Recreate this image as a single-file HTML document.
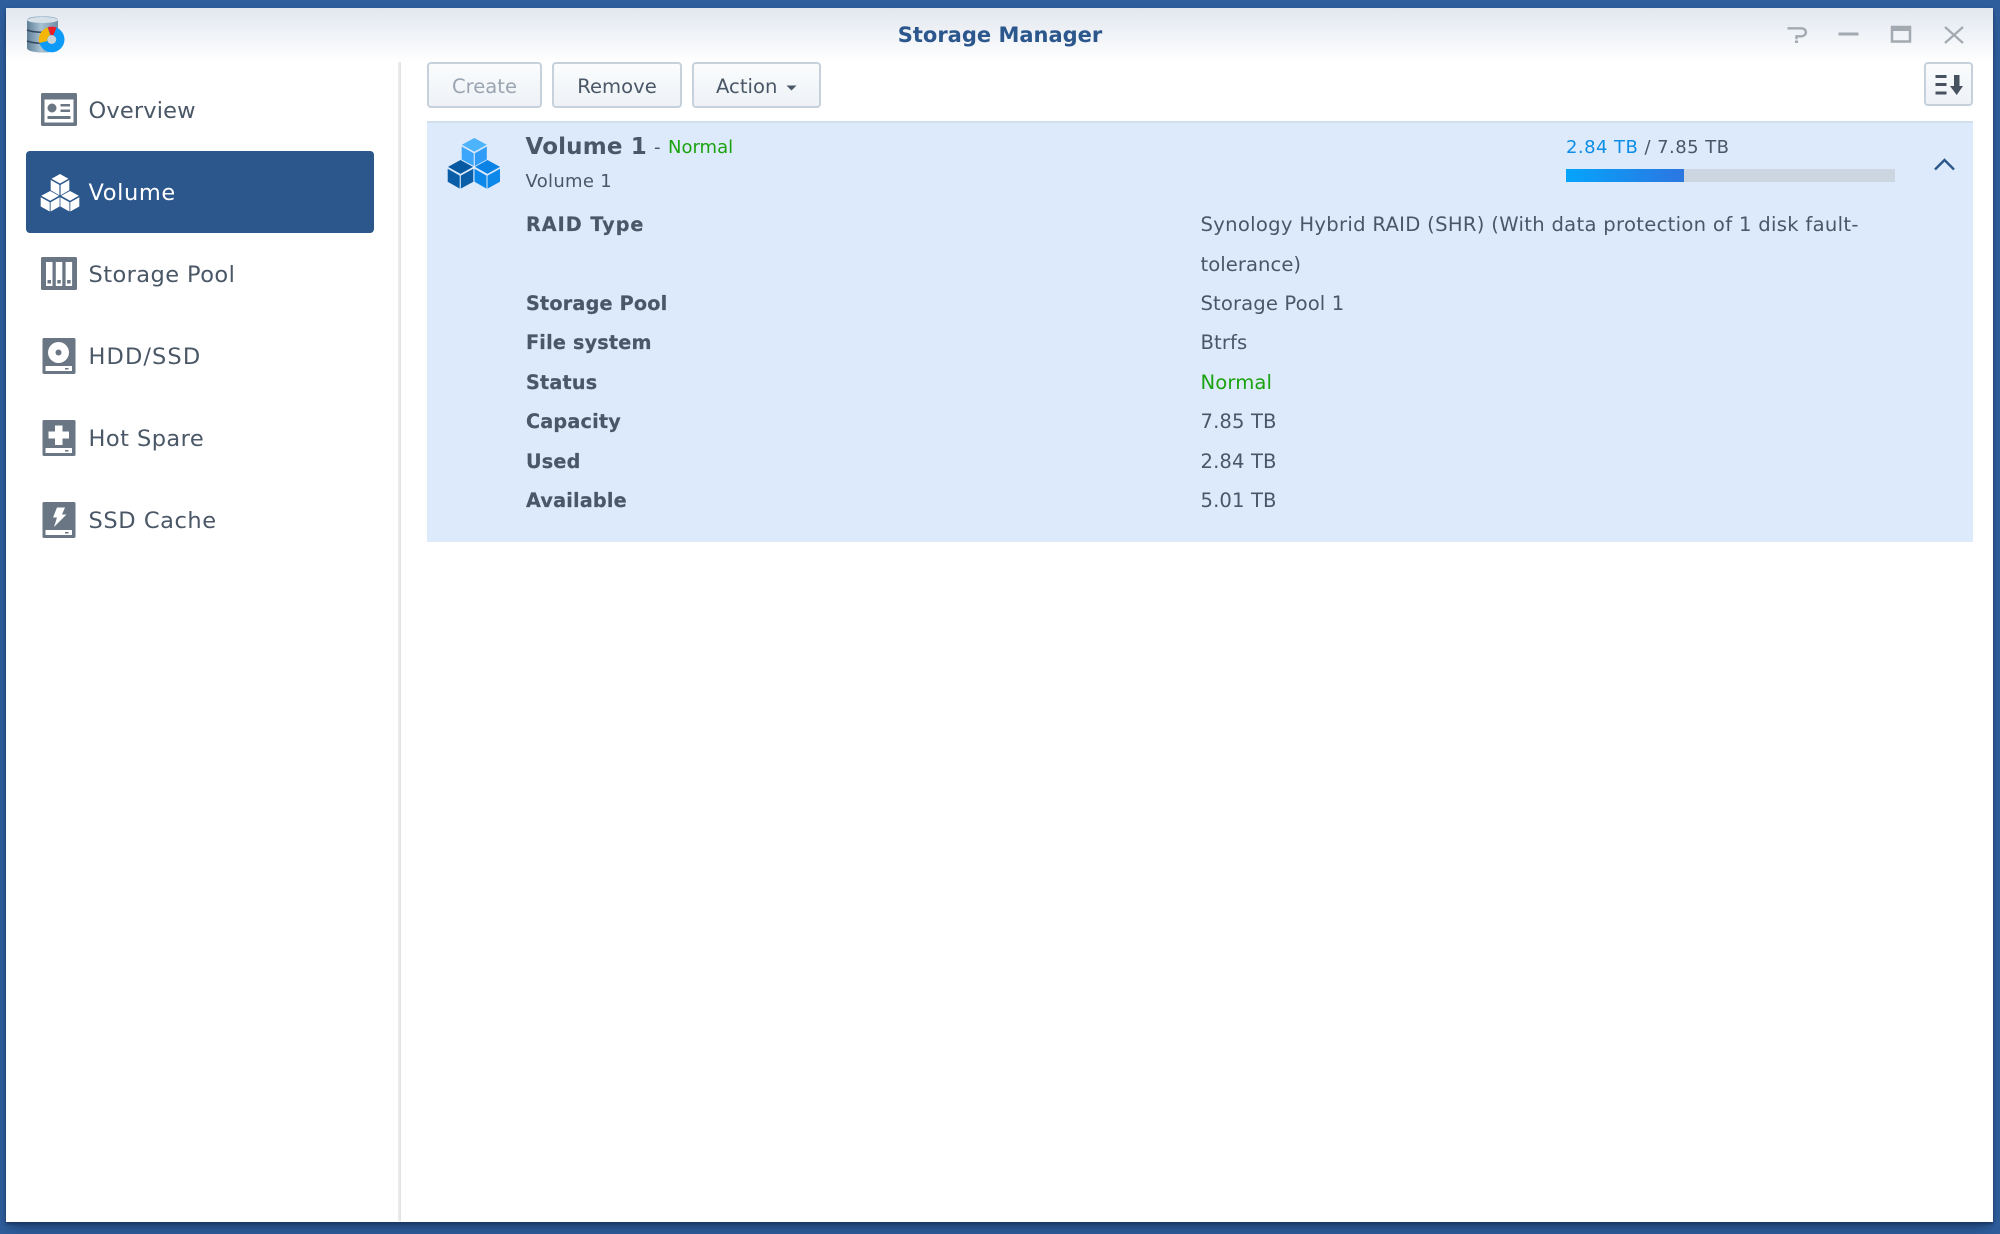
<!DOCTYPE html>
<html lang="en"><head><meta charset="utf-8"><title>Storage Manager</title>
<style>
html,body{margin:0;padding:0;width:2000px;height:1234px;overflow:hidden;background:#2f5e9c}
body{position:relative;font-family:"DejaVu Sans","Liberation Sans",sans-serif;color:#4a5766}
#win{position:absolute;left:6px;top:8px;width:1987px;height:1214px;background:#fff;box-shadow:0 2px 3px #1a3560,0 9px 12px -4px rgba(20,45,85,.6)}
#hdr{position:absolute;left:6px;top:8px;width:1987px;height:54px;background:linear-gradient(#e1e7ef,#fff)}
.t{position:absolute;white-space:nowrap;line-height:30px;height:30px}
.nav{font-size:22.5px;left:88.500px;color:#4a5766}
.b{font-weight:bold;font-size:19.2px;left:526px;letter-spacing:.2px;-webkit-text-stroke:.2px #4a5766}
.v{font-size:19.6px;left:1200.500px;letter-spacing:.12px}
.btn{position:absolute;top:62px;height:42px;border:2px solid #c6d1dc;border-radius:4px;background:linear-gradient(#fafcfd,#eef2f6);text-align:center;line-height:45px;font-size:19.6px;white-space:nowrap;box-sizing:content-box}
svg{position:absolute;left:0;top:0}
</style></head><body>
<div id="win"></div><div id="hdr"></div>
<div style="position:absolute;left:398px;top:62px;width:3px;height:1159px;background:linear-gradient(90deg,#eceef0,#e0e2e5)"></div>
<div style="position:absolute;left:26px;top:151px;width:348px;height:82px;background:#2b578c;border-radius:4px"></div>
<div style="position:absolute;left:427px;top:121px;width:1546px;height:421px;background:#ddeafb;border-top:2px solid #d2dfec;box-sizing:border-box"></div>
<div style="position:absolute;left:1566px;top:169px;width:118px;height:13px;background:linear-gradient(90deg,#05a4fb,#2c76e0)"></div>
<div style="position:absolute;left:1684px;top:169px;width:211px;height:13px;background:#cbd6e0"></div>

<div class="t" style="left:0;width:2000px;text-align:center;top:20px;font-weight:bold;font-size:21px;color:#2b578c">Storage Manager</div>
<div class="t nav" style="top:95.500px;letter-spacing:.16px">Overview</div>
<div class="t nav" style="top:177.500px;color:#fff;letter-spacing:.6px">Volume</div>
<div class="t nav" style="top:260px;letter-spacing:.42px">Storage Pool</div>
<div class="t nav" style="top:342px;letter-spacing:1.1px">HDD/SSD</div>
<div class="t nav" style="top:424px;letter-spacing:.45px">Hot Spare</div>
<div class="t nav" style="top:506px;letter-spacing:.57px">SSD Cache</div>

<div class="btn" style="left:427px;width:111px;color:#9aa5b1">Create</div>
<div class="btn" style="left:552px;width:126px">Remove</div>
<div class="btn" style="left:692px;width:125px;text-align:left;text-indent:22px">Action</div>
<div class="btn" style="left:1924px;top:62px;height:40px;width:45px"></div>

<div class="t" style="left:525.500px;top:132px;font-weight:bold;font-size:23px;letter-spacing:.15px">Volume 1</div>
<div class="t" style="left:654px;top:133px;font-size:18px">-</div>
<div class="t" style="left:668px;top:133px;font-size:18px;color:#1aa30f">Normal</div>
<div class="t" style="left:525.500px;top:167px;font-size:18px;letter-spacing:.3px">Volume 1</div>
<div class="t" style="left:1566px;top:133px;font-size:18px;letter-spacing:.45px"><span style="color:#0c8de8">2.84 TB</span> / 7.85 TB</div>

<div class="t b" style="top:210px;letter-spacing:1px">RAID Type</div>
<div class="t v" style="top:210px;letter-spacing:.3px">Synology Hybrid RAID (SHR) (With data protection of 1 disk fault-</div>
<div class="t v" style="top:249.500px;letter-spacing:.05px">tolerance)</div>
<div class="t b" style="top:289px">Storage Pool</div>
<div class="t v" style="top:289px">Storage Pool 1</div>
<div class="t b" style="top:328px">File system</div>
<div class="t v" style="top:328px">Btrfs</div>
<div class="t b" style="top:368px">Status</div>
<div class="t v" style="top:368px;color:#1aa30f">Normal</div>
<div class="t b" style="top:407px">Capacity</div>
<div class="t v" style="top:407px">7.85 TB</div>
<div class="t b" style="top:447px">Used</div>
<div class="t v" style="top:447px">2.84 TB</div>
<div class="t b" style="top:486px">Available</div>
<div class="t v" style="top:486px">5.01 TB</div>

<svg width="2000" height="1234" viewBox="0 0 2000 1234">
<defs><linearGradient id="cyl" x1="0" x2="1" y1="0" y2="0"><stop offset="0" stop-color="#5f7f98"/><stop offset=".45" stop-color="#a9c2d3"/><stop offset="1" stop-color="#6f8ea6"/></linearGradient></defs>
<!-- app logo -->
<path d="M27 20c0-5 31-5 31 0v28c0 6-31 6-31 0z" fill="url(#cyl)"/>
<path d="M27 30c8 3 23 3 31 0M27 41c8 3 23 3 31 0" stroke="#34495e" stroke-width="1.500" fill="none"/>
<ellipse cx="42.500" cy="20" rx="15.500" ry="3" fill="#d5e0e8"/>
<circle cx="51.700" cy="39.500" r="12.800" fill="#0d9bf7"/>
<circle cx="51.700" cy="39.500" r="4.500" fill="#c9d3da"/>
<path d="M39.200 43A12.800 12.800 0 0 1 47.600 27.400L50.200 35.300A4.500 4.500 0 0 0 47.400 41Z" fill="#f5b60a"/>
<path d="M47.800 27.300A12.800 12.800 0 0 1 56.500 27.600L53.400 35.300A4.500 4.500 0 0 0 50.600 35.100Z" fill="#ee1c25"/>

<!-- overview -->
<rect x="41" y="93" width="36" height="33" rx="1.500" fill="#6a7684"/>
<rect x="44.500" y="99.500" width="29" height="23" fill="#fff"/>
<circle cx="52" cy="108" r="4.500" fill="#6a7684"/>
<path d="M60.500 104h9.500v2.500h-9.500zM60.500 109.500h9.500v2.500h-9.500zM47.500 116h23v3h-23z" fill="#6a7684"/>
<!-- volume white -->
<g fill="#fff">
<path d="M60 174l8.500 4.700-8.500 4.800-8.500-4.800zM50.700 180l8.700 4.900v10.300l-8.700-4.900zM69.300 180v10.300l-8.700 4.900v-10.300z"/>
<path d="M50.200 191l8.800 4.800-8.800 4.900-9-4.900zM40.700 197.300l9 5v9.200l-9-5zM59.600 197.300v9.200l-9 5v-9.200z"/>
<path d="M70 191l8.800 4.800-8.800 4.900-8.800-4.900zM60.400 197.300l9 5v9.200l-9-5zM79.300 197.300v9.200l-9 5v-9.200z"/>
</g>
<!-- storage pool -->
<rect x="41" y="257" width="36" height="33" rx="1.500" fill="#6a7684"/>
<path d="M46 262h6.500v24H46zM55.800 262h6.500v24h-6.500zM65.600 262h6.500v24h-6.500z" fill="#fff"/>
<path d="M47.500 280h3.500v3.500h-3.500zM57.300 280h3.500v3.500h-3.500zM67.100 280h3.500v3.500h-3.500z" fill="#6a7684"/>
<!-- hdd -->
<rect x="42.500" y="338" width="33" height="36" rx="1.500" fill="#6a7684"/>
<circle cx="58.500" cy="352.500" r="10.500" fill="#fff"/><circle cx="58.500" cy="352.500" r="3" fill="#6a7684"/>
<path d="M45.500 366h26.500v5H45.500z" fill="#fff"/><path d="M65 368h3.500v1.500H65z" fill="#6a7684"/>
<!-- hot spare -->
<rect x="42.500" y="420" width="33" height="36" rx="1.500" fill="#6a7684"/>
<path d="M55 425.500h7.500v6h6.500v7h-6.500v6.500H55v-6.500h-6.500v-7H55z" fill="#fff"/>
<path d="M45.500 448h26.500v5H45.500z" fill="#fff"/><path d="M65 450h3.500v1.500H65z" fill="#6a7684"/>
<!-- ssd -->
<rect x="42.500" y="502" width="33" height="36" rx="1.500" fill="#6a7684"/>
<path d="M57 507.500h8l-3 7h4.500L54 527l3-9.500h-4z" fill="#fff"/>
<path d="M45.500 530h26.500v5H45.500z" fill="#fff"/><path d="M65 532h3.500v1.500H65z" fill="#6a7684"/>

<!-- volume colour icon -->
<path d="M474.300 138l12.500 6.800-12.500 7-12.500-7z" fill="#4db3fd"/>
<path d="M461.700 146.500l12 6.700v12.800l-12-6.500z" fill="#3ba6fb"/>
<path d="M486.800 146.500l-12 6.700v12.800l12-6.500z" fill="#2f9df8"/>
<path d="M460.500 160l12.500 6.900-12.500 7-12.500-7z" fill="#0559a3"/>
<path d="M447.700 168.800l12 6.800v13l-12-6.800z" fill="#0a5ea8"/>
<path d="M473.300 168.800l-12.500 6.800v13l12.500-6.800z" fill="#0a5ea8"/>
<path d="M487.500 160l12.500 6.900-12.500 7-12.500-7z" fill="#0a82e6"/>
<path d="M474.500 168.800l12 6.800v13l-12-6.800z" fill="#0c87ea"/>
<path d="M500 168.800l-12.500 6.800v13l12.500-6.800z" fill="#0c87ea"/>

<!-- caret -->
<path d="M786.500 85.500h10l-5 5z" fill="#4a5766"/>
<!-- sort icon -->
<path d="M1935.500 75h11v3h-11zM1935.500 83h11v3h-11zM1935.500 91.500h11v3h-11z" fill="#46525f"/>
<path d="M1954 75h5.500v11h3.500l-6.300 9-6.700-9h4z" fill="#46525f"/>
<!-- chevron -->
<path d="M1935 169.500l9.500-9.500 9.500 9.500" fill="none" stroke="#2b578c" stroke-width="2.400"/>
<!-- window controls -->
<path d="M1787.500 28.300h13.500c6.500 0 6.500 8 0 8h-4.500v3" fill="none" stroke="#a3a9b0" stroke-width="2.400"/>
<rect x="1795" y="40.500" width="3" height="2.500" fill="#a3a9b0"/>
<rect x="1838.500" y="32.500" width="20" height="3" fill="#a3a9b0"/>
<rect x="1892" y="27" width="18" height="14.500" fill="none" stroke="#a3a9b0" stroke-width="2.500"/>
<rect x="1891" y="26" width="20" height="5" fill="#a3a9b0"/>
<path d="M1945 27l18 16M1963 27l-18 16" stroke="#a3a9b0" stroke-width="2.200" fill="none"/>
</svg>
</body></html>
